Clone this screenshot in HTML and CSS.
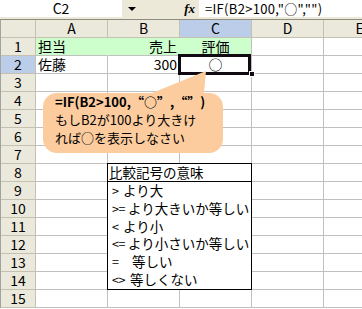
FILE: index.html
```html
<html>
<head>
<meta charset="utf-8">
<title>IF関数と比較記号</title>
<link rel="stylesheet" href="styles.css">
</head>
<body>
<div class="fbar">
  <div class="namebox">C2</div>
  <div class="fbar-tools"><span class="drop"></span><span class="fx">fx</span></div>
  <div class="formula">=IF(B2&gt;100,"○","")</div>
</div>

<div class="sheet">
  <div class="hd"></div><div class="hd">A</div><div class="hd">B</div><div class="hd on">C</div><div class="hd">D</div><div class="hd">E</div>

  <div class="rh">1</div><div class="c fill">担当</div><div class="c fill r">売上</div><div class="c fill ctr">評価</div><div class="c"></div><div class="c"></div>
  <div class="rh on">2</div><div class="c">佐藤</div><div class="c r">300</div><div class="c ctr active">○</div><div class="c"></div><div class="c"></div>
  <div class="rh">3</div><div class="c"></div><div class="c"></div><div class="c"></div><div class="c"></div><div class="c"></div>
  <div class="rh">4</div><div class="c"></div><div class="c"></div><div class="c"></div><div class="c"></div><div class="c"></div>
  <div class="rh">5</div><div class="c"></div><div class="c"></div><div class="c"></div><div class="c"></div><div class="c"></div>
  <div class="rh">6</div><div class="c"></div><div class="c"></div><div class="c"></div><div class="c"></div><div class="c"></div>
  <div class="rh">7</div><div class="c"></div><div class="c"></div><div class="c"></div><div class="c"></div><div class="c"></div>
  <div class="rh">8</div><div class="c"></div><div class="c"></div><div class="c"></div>
  <div class="rh">9</div><div class="c"></div><div class="c"></div><div class="c"></div>
  <div class="rh">10</div><div class="c"></div><div class="c"></div><div class="c"></div>
  <div class="rh">11</div><div class="c"></div><div class="c"></div><div class="c"></div>
  <div class="rh">12</div><div class="c"></div><div class="c"></div><div class="c"></div>
  <div class="rh">13</div><div class="c"></div><div class="c"></div><div class="c"></div>
  <div class="rh">14</div><div class="c"></div><div class="c"></div><div class="c"></div>
  <div class="rh">15</div><div class="c"></div><div class="c"></div><div class="c"></div><div class="c"></div><div class="c"></div>

  <div class="legend">
    <div class="legend-title">比較記号の意味</div>
    <div class="legend-row"><span class="sym">&gt;</span>より大</div>
    <div class="legend-row"><span class="sym wide">&gt;=</span>より大きいか等しい</div>
    <div class="legend-row"><span class="sym">&lt;</span>より小</div>
    <div class="legend-row"><span class="sym wide">&lt;=</span>より小さいか等しい</div>
    <div class="legend-row"><span class="sym far">=</span>等しい</div>
    <div class="legend-row"><span class="sym mid">&lt;&gt;</span>等しくない</div>
  </div>

  <div class="callout">
    <svg class="callout-bg" width="180" height="82" viewBox="0 0 180 82">
      <path d="M14 22 H109 L163 0 L161 22 H166 A14 14 0 0 1 180 36 V68 A14 14 0 0 1 166 82 H14 A14 14 0 0 1 0 68 V36 A14 14 0 0 1 14 22 Z" fill="#fccc9e"/>
    </svg>
    <div class="callout-text">
      <b>=IF(B2&gt;100,<span class="q">“</span>○<span class="q">”</span>,<span class="q">“”</span>)</b><br>
      もしB2が100より大きけ<br>
      れば○を表示しなさい
    </div>
  </div>
</div>
</body>
</html>
```

FILE: styles.css
```css
html,body {margin:0; padding:0; overflow:hidden; background:#fff;}
body {width:362px; height:309px; font:14px/17px "Noto Sans CJK JP", "Noto Sans", sans-serif; color:#000;}

/* formula bar */
.fbar {display:flex; height:19px; background:#ece9d8;}
.namebox {width:122px; height:17px; background:#fff; text-align:center; line-height:17px;}
.fbar-tools {width:77px; height:17px; display:flex; align-items:center;}
.drop {width:0; height:0; margin-left:6px; border-left:4px solid transparent; border-right:4px solid transparent; border-top:4px solid #000;}
.fx {margin-left:auto; margin-right:4px; font:italic bold 13px/17px "Liberation Serif", serif;}
.formula {flex:1; height:17px; padding-left:6px; background:#fff; font-size:13px; line-height:17px; letter-spacing:.3px; white-space:nowrap; overflow:hidden;}

/* grid */
.sheet {position:relative; display:grid; grid-template-columns:35px repeat(5,72px); grid-auto-rows:18px; border-top:1px solid #8e8c80; border-left:1px solid #a3a3a3;}
.hd,.rh {box-sizing:border-box; background:#ebe9dc; border-right:1px solid #c4c1b1; border-bottom:1px solid #c4c1b1; text-align:center; line-height:17px;}
.hd.on,.rh.on {background:#bccde9;}
.c {box-sizing:border-box; padding:0 2px; border-right:1px solid #c0c0c0; border-bottom:1px solid #c0c0c0; white-space:nowrap; line-height:17px;}
.c.r {text-align:right;}
.c.ctr {text-align:center;}
.c.fill {background:#ccffcc; border-right-color:#ccffcc;}
.c.fill.ctr {border-right-color:#c0c0c0;}

.active {position:relative;}
.active:after {content:""; position:absolute; top:-2px; left:-2px; right:0; bottom:-2px; border:3px solid #120a12;}
.active:before {content:""; position:absolute; right:-4px; bottom:-4px; width:4px; height:4px; border:1px solid #fff; background:#120a12; z-index:1;}

/* legend box */
.legend {grid-column:3 / 5; grid-row:9 / 16; margin:-1px 0 0 -1px; box-sizing:border-box; border:1px solid #000; background:#fff; display:flex; flex-direction:column; font-size:13.5px;}
.legend-title {height:18px; box-sizing:border-box; border-bottom:1px solid #000; padding-left:1px; line-height:17px;}
.legend-row {flex:1; padding-left:4px; line-height:17px; white-space:nowrap;}
.sym {display:inline-block; width:11px; font-size:12.5px; letter-spacing:-.5px;}
.sym.wide {width:16px;}
.sym.mid {width:18px;}
.sym.far {width:20px;}

/* callout */
.callout {position:absolute; left:42px; top:51px; width:180px; height:82px; z-index:2;}
.callout-bg {position:absolute; left:0; top:0;}
.callout-text {position:relative; padding:22px 0 0 12px; font-size:13px; line-height:18px; white-space:nowrap;}
.q {font-feature-settings:"fwid";}
```
